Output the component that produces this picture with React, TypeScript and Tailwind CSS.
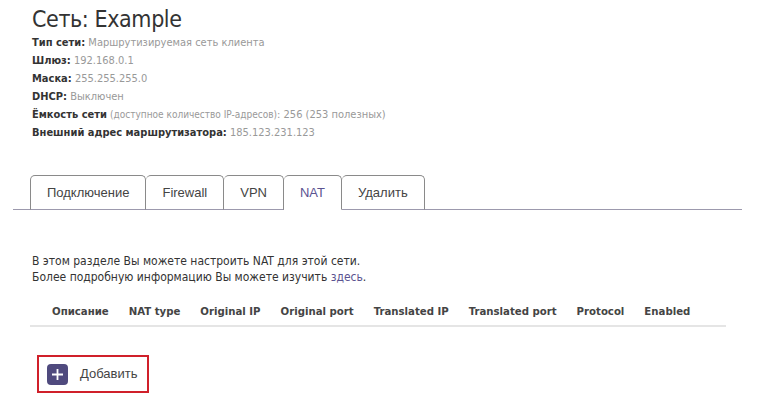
import React from "react";

const font = { fontFamily: "Tahoma, 'DejaVu Sans Condensed', 'DejaVu Sans', sans-serif" };

function Info({ label, children }: { label: string; children: React.ReactNode }) {
  return (
    <div className="h-[18px] leading-[18px] text-[11px]">
      <span className="font-bold text-[#333]">{label}</span> <span className="text-[#999]">{children}</span>
    </div>
  );
}

const tabs = ["Подключение", "Firewall", "VPN", "NAT", "Удалить"];
const cols = ["Описание", "NAT type", "Original IP", "Original port", "Translated IP", "Translated port", "Protocol", "Enabled"];

export default function App() {
  return (
    <div className="w-[765px] h-[415px] bg-white text-[#333] overflow-hidden" style={font}>
      <div className="pl-[32px] pt-[5px]">
        <h1 className="text-[23px] leading-[29px] text-[#333] tracking-[-0.4px]">Сеть: Example</h1>
        <div>
          <Info label="Тип сети:">Маршрутизируемая сеть клиента</Info>
          <Info label="Шлюз:">192.168.0.1</Info>
          <Info label="Маска:">255.255.255.0</Info>
          <Info label="DHCP:">Выключен</Info>
          <div className="h-[18px] leading-[18px] text-[11px]">
            <span className="font-bold text-[#333]">Ёмкость сети</span>{" "}
            <span className="text-[#999] text-[10px]">(доступное количество IP-адресов)</span>
            <span className="text-[#999]">: 256 (253 полезных)</span>
          </div>
          <Info label="Внешний адрес маршрутизатора:">185.123.231.123</Info>
        </div>
      </div>

      <div className="mt-[32px] ml-[13px] w-[729px] flex items-end border-b border-[#9c99ad] pl-[17px] h-[36px]">
        {tabs.map((t) => (
          <div
            key={t}
            className={`h-[35px] -mb-px flex items-center justify-center px-[16px] border border-[#8a8a8a] border-l-0 first:border-l rounded-t-[5px] text-[13px] ${
              t === "NAT" ? "bg-white border-b-white text-[#5b5391]" : "border-b-[#9c99ad] text-[#444]"
            }`}
            style={{ fontFamily: "'Liberation Sans', Arial, sans-serif" }}
          >
            {t}
          </div>
        ))}
      </div>

      <div className="pl-[32px] mt-[43px] text-[12px] leading-[16px] text-[#333]">
        <div>В этом разделе Вы можете настроить NAT для этой сети.</div>
        <div>
          Более подробную информацию Вы можете изучить <span className="text-[#5b5391]">здесь</span>.
        </div>
      </div>

      <div className="ml-[30px] w-[696px] mt-[14px] border-b-2 border-[#e5e5e5] h-[28px] flex items-center pl-[22px] gap-[20px] text-[11.3px] font-bold text-[#444]">
        {cols.map((c) => (
          <span key={c}>{c}</span>
        ))}
      </div>

      <div className="ml-[37px] mt-[28px] w-[112px] h-[38px] border-2 border-[#d0202a] flex items-center pl-[8px] gap-[12px]">
        <div className="w-[21px] h-[21px] rounded-[4px] bg-[#4f4a7e] flex items-center justify-center">
          <svg width="13" height="13" viewBox="0 0 13 13">
            <path d="M6.5 1v11M1 6.5h11" stroke="white" strokeWidth="1.8" />
          </svg>
        </div>
        <span className="text-[13px] text-[#444]" style={{ fontFamily: "'Liberation Sans', Arial, sans-serif" }}>
          Добавить
        </span>
      </div>
    </div>
  );
}
